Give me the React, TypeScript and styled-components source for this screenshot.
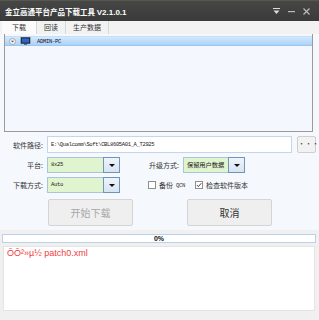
import styled, { createGlobalStyle } from 'styled-components';

const GlobalStyle = createGlobalStyle`
  html, body {
    margin: 0;
    padding: 0;
    background: #f0f0f0;
  }
  * {
    box-sizing: border-box;
  }
`;

const CJK = `"Noto Sans CJK SC", "Noto Sans", sans-serif`;
const MONO = `"Liberation Mono", "DejaVu Sans Mono", monospace`;

const SWindow = styled.div`
  width: 319px;
  height: 320px;
  display: flex;
  flex-direction: column;
  background: #f0f0f0;
  font-family: ${CJK};
  color: #222;
  overflow: hidden;
`;

const STitleBar = styled.div`
  height: 21px;
  flex: none;
  display: flex;
  align-items: center;
  justify-content: space-between;
  padding: 0 8px 0 5px;
  background: linear-gradient(#464646, #3a3a3a);
  border-top: 1px solid #55584a;
`;

const STitle = styled.div`
  color: #fff;
  font-size: 7.5px;
  font-weight: 700;
  white-space: nowrap;
`;

const SVersion = styled.span`
  font-family: "Liberation Sans", Arial, sans-serif;
  font-size: 8px;
  font-weight: 700;
`;

const SWinButtons = styled.div`
  display: flex;
  align-items: center;
  gap: 6px;
`;

const STabBar = styled.div`
  height: 13px;
  flex: none;
  display: flex;
  align-items: stretch;
  background: #f2f2f2;
  padding-left: 2px;
`;

const STab = styled.div<{ $active?: boolean }>`
  font-size: 7px;
  line-height: 13px;
  color: #333;
  padding: 0 ${({ $active }) => ($active ? '10px' : '7px')};
  background: ${({ $active }) => ($active ? '#fbfbfb' : 'transparent')};
  border-right: 1px solid #d8d8d8;
`;

const SBody = styled.div`
  flex: 1;
  display: flex;
  flex-direction: column;
`;

const STopArea = styled.div`
  background: #f5f8fd;
  padding: 0 0 4px 0;
`;

const SListPane = styled.div`
  margin: 0 6px 0 4px;
  height: 98px;
  background: #f4f7fe;
  border: 1px solid #9a9a9a;
  border-top: none;
  padding-top: 2px;
`;

const SDeviceRow = styled.div`
  height: 10px;
  display: flex;
  align-items: center;
  gap: 4px;
  padding-left: 4px;
  background: linear-gradient(#d3e8fc, #a9d2f8);
  border-top: 1px solid #c6def6;
  border-bottom: 1px solid #9cc6ef;
`;

const SDeviceName = styled.span`
  font-family: ${MONO};
  font-size: 5.5px;
  letter-spacing: -0.3px;
  color: #112;
  margin-left: 2px;
`;

const SForm = styled.div`
  display: grid;
  grid-template-columns: 43px 1fr;
  column-gap: 4px;
  row-gap: 4px;
  padding: 4px 3px 0 0;
  align-items: center;
`;

const SLabel = styled.div`
  font-size: 7px;
  text-align: right;
  color: #333;
  white-space: nowrap;
`;

const SPathRow = styled.div`
  display: flex;
  align-items: center;
  gap: 5px;
`;

const SPathInput = styled.div`
  flex: 1;
  height: 17px;
  background: #fff;
  border: 1px solid #c4d6ec;
  font-family: ${MONO};
  font-size: 5.5px;
  letter-spacing: -0.35px;
  line-height: 15px;
  padding-left: 3px;
  color: #222;
  white-space: nowrap;
  overflow: hidden;
`;

const SBrowseBtn = styled.div`
  width: 19px;
  height: 17px;
  border: 1px solid #cfcfcf;
  border-radius: 2px;
  background: #f2f2f2;
  font-size: 7px;
  line-height: 13px;
  text-align: center;
  color: #444;
`;

const SFieldRow = styled.div`
  display: flex;
  align-items: center;
`;

const SCombo = styled.div<{ $width: number }>`
  width: ${({ $width }) => $width}px;
  height: 16px;
  display: flex;
  flex: none;
`;

const SComboText = styled.div<{ $cjk?: boolean }>`
  flex: 1;
  background: #e0f4cf;
  border: 1px solid #a9c4dd;
  border-right: none;
  font-family: ${({ $cjk }) => ($cjk ? CJK : MONO)};
  font-size: ${({ $cjk }) => ($cjk ? '6.2px' : '5.5px')};
  letter-spacing: ${({ $cjk }) => ($cjk ? '0' : '-0.3px')};
  line-height: 14px;
  padding-left: 3px;
  color: #222;
  white-space: nowrap;
  overflow: hidden;
`;

const SComboBtn = styled.div`
  width: 17px;
  border: 1px solid #6f93b9;
  background: linear-gradient(#eef4fb, #d7e4f2);
  display: flex;
  align-items: center;
  justify-content: center;
`;

const SArrow = styled.div`
  width: 0;
  height: 0;
  border-left: 3px solid transparent;
  border-right: 3px solid transparent;
  border-top: 3px solid #111;
`;

const SSideLabel = styled(SLabel)`
  width: 51px;
  margin-left: 8px;
  margin-right: 4px;
`;

const SCheckGroup = styled.div`
  display: flex;
  align-items: center;
  gap: 10px;
  margin-left: 28px;
`;

const SCheck = styled.label`
  display: flex;
  align-items: center;
  gap: 3px;
  font-size: 7px;
  color: #333;
  white-space: nowrap;
`;

const SBox = styled.span`
  width: 8px;
  height: 8px;
  border: 1px solid #8e8f8f;
  background: #fff;
  display: flex;
  align-items: center;
  justify-content: center;
`;

const SLatin = styled.span`
  font-family: ${MONO};
  font-size: 5.5px;
  letter-spacing: -0.3px;
`;

const SButtonRow = styled.div`
  display: flex;
  gap: 54px;
  padding: 6px 0 0 48px;
`;

const SActionBtn = styled.div<{ $disabled?: boolean }>`
  width: 85px;
  height: 27px;
  background: #efefef;
  border: 1px solid #d4d4d4;
  border-radius: 2px;
  font-size: 10px;
  line-height: 25px;
  text-align: center;
  color: ${({ $disabled }) => ($disabled ? '#a6a6a6' : '#333')};
`;

const SProgress = styled.div`
  margin: 4px 3px 0 2px;
  height: 9px;
  background: #fff;
  border: 1px solid #b9d2ec;
  font-family: "Liberation Sans", Arial, sans-serif;
  font-size: 7px;
  font-weight: 700;
  line-height: 7px;
  text-align: center;
  color: #111;
`;

const SLog = styled.div`
  margin: 3px 4px 9px 3px;
  flex: 1;
  background: #fff;
  border: 1px solid #e4e4e4;
  padding: 1px 3px;
  font-family: "Liberation Sans", Arial, sans-serif;
  font-size: 9px;
  color: #f23b3b;
`;

function WinControls() {
  return (
    <SWinButtons>
      <svg width='9' height='9' viewBox='0 0 9 9'>
        <rect x='1' y='1' width='7' height='1' fill='#ddd' />
        <polygon points='1.5,3.5 7.5,3.5 4.5,7' fill='#ddd' />
      </svg>
      <svg width='9' height='9' viewBox='0 0 9 9'>
        <rect x='1' y='4' width='7' height='1.2' fill='#bbb' />
      </svg>
      <svg width='9' height='9' viewBox='0 0 9 9'>
        <path d='M1.5 1.5 L7.5 7.5 M7.5 1.5 L1.5 7.5' stroke='#bbb' strokeWidth='1.2' />
      </svg>
    </SWinButtons>
  );
}

function DeviceIcons() {
  return (
    <>
      <svg width='7' height='7' viewBox='0 0 7 7'>
        <circle cx='3.5' cy='3.5' r='3' fill='#f4f4f4' stroke='#888' strokeWidth='0.6' />
        <polygon points='2,2.8 5,2.8 3.5,4.5' fill='#555' />
      </svg>
      <svg width='11' height='8' viewBox='0 0 11 8'>
        <rect x='1' y='0.5' width='9' height='6' fill='#1d2a55' stroke='#333' strokeWidth='0.6' />
        <rect x='2' y='1.5' width='7' height='4' fill='#2f64c8' />
        <rect x='4' y='6.5' width='3' height='1.2' fill='#444' />
      </svg>
    </>
  );
}

function Combo({ width, value, cjk }: { width: number; value: string; cjk?: boolean }) {
  return (
    <SCombo $width={width}>
      <SComboText $cjk={cjk}>{value}</SComboText>
      <SComboBtn>
        <SArrow />
      </SComboBtn>
    </SCombo>
  );
}

export default function App() {
  return (
    <>
      <GlobalStyle />
      <SWindow>
        <STitleBar>
          <STitle>
            金立高通平台产品下载工具 <SVersion>V2.1.0.1</SVersion>
          </STitle>
          <WinControls />
        </STitleBar>

        <STabBar>
          <STab $active>下载</STab>
          <STab>回读</STab>
          <STab>生产数据</STab>
        </STabBar>

        <SBody>
          <STopArea>
            <SListPane>
              <SDeviceRow>
                <DeviceIcons />
                <SDeviceName>ADMIN-PC</SDeviceName>
              </SDeviceRow>
            </SListPane>

            <SForm>
              <SLabel>软件路径:</SLabel>
              <SPathRow>
                <SPathInput>E:\Qualcomm\Soft\CBL8605A01_A_T2925</SPathInput>
                <SBrowseBtn>···</SBrowseBtn>
              </SPathRow>

              <SLabel>平台:</SLabel>
              <SFieldRow>
                <Combo width={73} value='8x25' />
                <SSideLabel>升级方式:</SSideLabel>
                <Combo width={62} value='保留用户数据' cjk />
              </SFieldRow>

              <SLabel>下载方式:</SLabel>
              <SFieldRow>
                <Combo width={73} value='Auto' />
                <SCheckGroup>
                  <SCheck>
                    <SBox />
                    备份<SLatin>QCN</SLatin>
                  </SCheck>
                  <SCheck>
                    <SBox>
                      <svg width='6' height='6' viewBox='0 0 6 6'>
                        <path d='M0.8 3 L2.4 4.6 L5.3 1.2' stroke='#333' strokeWidth='0.9' fill='none' />
                      </svg>
                    </SBox>
                    检查软件版本
                  </SCheck>
                </SCheckGroup>
              </SFieldRow>
            </SForm>

            <SButtonRow>
              <SActionBtn $disabled>开始下载</SActionBtn>
              <SActionBtn>取消</SActionBtn>
            </SButtonRow>
          </STopArea>

          <SProgress>0%</SProgress>
          <SLog>ÕÔ²»µ½ patch0.xml</SLog>
        </SBody>
      </SWindow>
    </>
  );
}
